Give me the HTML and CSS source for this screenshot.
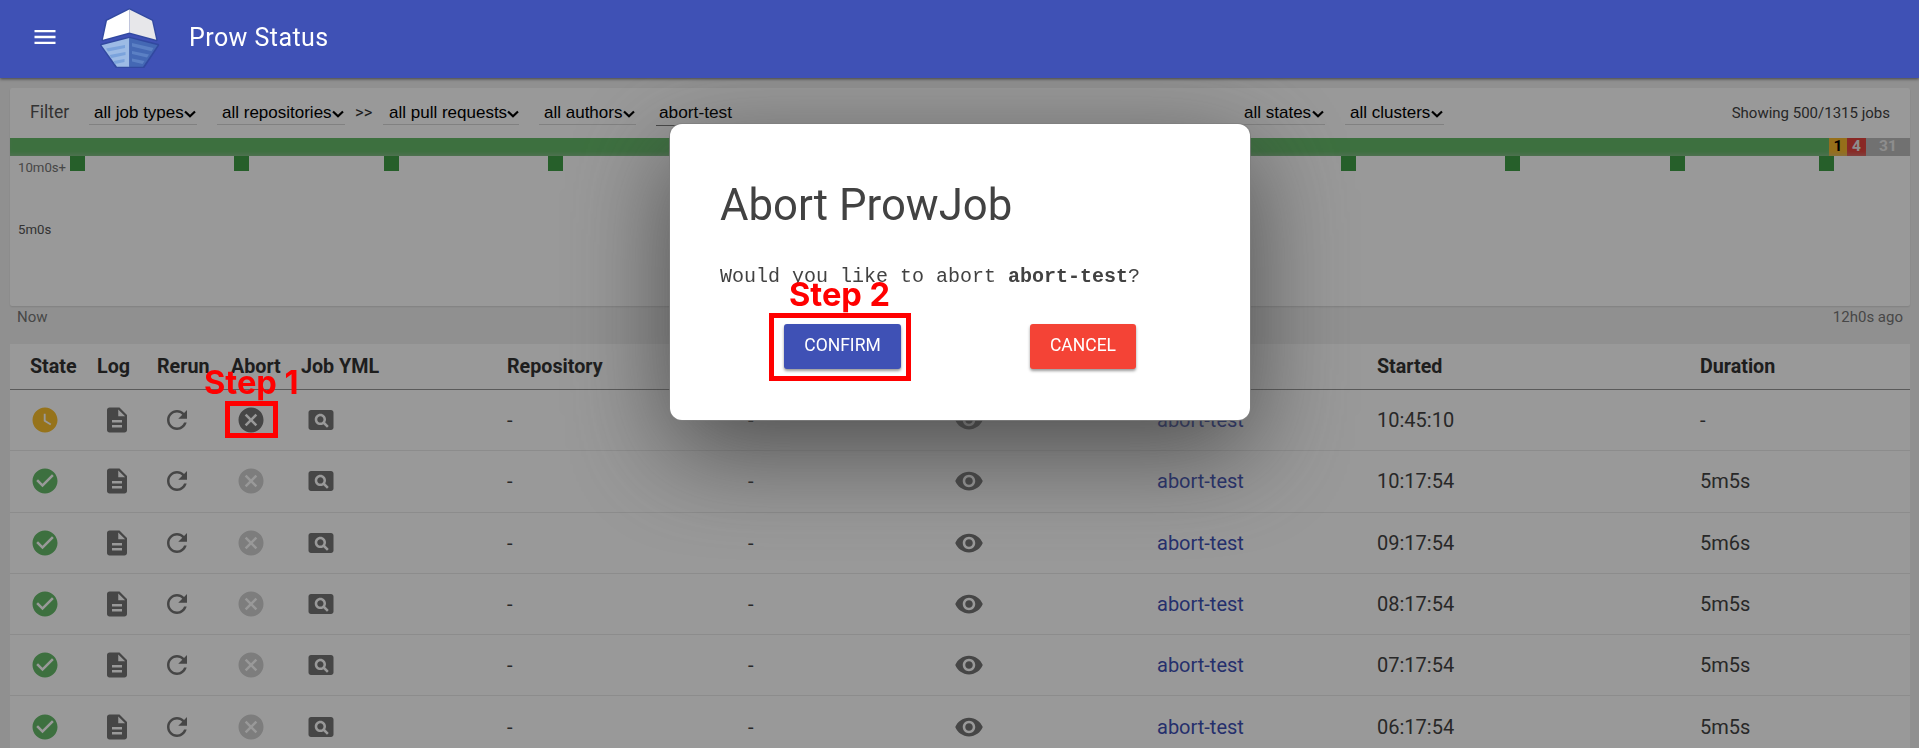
FILE: index.html
```html
<!DOCTYPE html>
<html lang="en">
<head>
<meta charset="utf-8">
<title>Prow Status</title>
<link rel="stylesheet" href="styles.css">
</head>
<body>
<svg class="defs" aria-hidden="true">
  <symbol id="check" viewBox="0 0 24 24"><path d="M12 2C6.48 2 2 6.48 2 12s4.480 10 10 10 10-4.480 10-10S17.520 2 12 2zm-2 15l-5-5 1.410-1.410L10 14.170l7.590-7.590L19 8l-9 9z"/></symbol>
  <symbol id="clock" viewBox="0 0 24 24"><path d="M12 2C6.500 2 2 6.500 2 12s4.500 10 10 10 10-4.500 10-10S17.500 2 12 2zm4.200 14.200L11 13V7h1.500v5.200l4.500 2.700-.8 1.300z"/></symbol>
  <symbol id="doc" viewBox="0 0 24 24"><path d="M14 2H6c-1.100 0-1.990.9-1.990 2L4 20c0 1.100.89 2 1.990 2H18c1.100 0 2-.9 2-2V8l-6-6zm2 16H8v-2h8v2zm0-4H8v-2h8v2zm-3-5V3.500L18.500 9H13z"/></symbol>
  <symbol id="rerun" viewBox="0 0 24 24"><path d="M17.650 6.350C16.200 4.900 14.210 4 12 4c-4.420 0-7.990 3.580-7.990 8s3.570 8 7.990 8c3.730 0 6.840-2.550 7.730-6h-2.080c-.82 2.330-3.040 4-5.650 4-3.310 0-6-2.690-6-6s2.690-6 6-6c1.660 0 3.140.69 4.220 1.780L13 11h7V4l-2.350 2.350z"/></symbol>
  <symbol id="cancel" viewBox="0 0 24 24"><path d="M12 2C6.470 2 2 6.470 2 12s4.470 10 10 10 10-4.470 10-10S17.530 2 12 2zm5 13.590L15.590 17 12 13.410 8.410 17 7 15.590 10.590 12 7 8.410 8.410 7 12 10.590 15.590 7 17 8.410 13.410 12 17 15.590z"/></symbol>
  <symbol id="view" viewBox="0 0 24 24"><path d="M11.500 9C10.120 9 9 10.120 9 11.500s1.120 2.500 2.500 2.500 2.500-1.120 2.500-2.500S12.880 9 11.500 9zM20 4H4c-1.100 0-2 .9-2 2v12c0 1.100.9 2 2 2h16c1.100 0 2-.9 2-2V6c0-1.100-.9-2-2-2zm-3.210 14.210l-2.910-2.910c-.69.44-1.510.7-2.390.7C9.010 16 7 13.990 7 11.500S9.010 7 11.500 7 16 9.010 16 11.500c0 .88-.26 1.690-.7 2.390l2.910 2.900-1.420 1.420z"/></symbol>
  <symbol id="eye" viewBox="0 0 24 24"><path d="M12 4.500C7 4.500 2.730 7.610 1 12c1.730 4.390 6 7.500 11 7.500s9.270-3.110 11-7.500c-1.730-4.390-6-7.500-11-7.500zM12 17c-2.760 0-5-2.240-5-5s2.240-5 5-5 5 2.240 5 5-2.240 5-5 5zm0-8c-1.660 0-3 1.340-3 3s1.340 3 3 3 3-1.340 3-3-1.340-3-3-3z"/></symbol>
</svg>

<header class="topbar">
  <svg class="menu" viewBox="0 0 24 24"><path d="M3 18h18v-2H3v2zm0-5h18v-2H3v2zm0-7v2h18V6H3z"/></svg>
  <svg class="logo" viewBox="100 8 60 60">
    <g stroke="#3249a0" stroke-width="2.400" stroke-linejoin="round" fill="#3249a0">
      <path d="M102.700 40 106.700 20.500 129.400 9.400 152 20.500 156.500 40 129.400 32.700z"/>
      <path d="M101.300 45 129.400 38 158 45 143.500 67H116.500z"/>
    </g>
    <path fill="#fff" d="M102.900 39.800 107 20.700 129.400 9.600V32.500z"/>
    <path fill="#e7e7ea" d="M156.200 39.800 152 20.700 129.400 9.600V32.500z"/>
    <path fill="#9dbbe5" d="M101.500 45.300 129.400 38V66.700H117z"/>
    <path fill="#4468b4" d="M157.500 45.300 129.400 38V66.700H143z"/>
    <path fill="#7ba3dc" d="M106 48.500l19-3.500v3l-17 3.500zM109.500 55l16-3v3l-14 3zM113.500 61l11-2v3l-9.500 2z"/>
    <path fill="#5b80c4" d="M132 43l21.500 5-2 3.200L132 46.500zM132 51l17 3.500-2 3-15-3.500zM132 58.500l12.500 2.500-2 3-10.500-2.500z"/>
  </svg>
  <h1 class="brand">Prow Status</h1>
</header>

<main class="page">
  <section class="card">
    <div class="filters">
      <span class="label">Filter</span>
      <span class="select types">all job types<svg viewBox="0 0 12 8"><path d="M1 1.500 6 6.300l5-4.800"/></svg></span>
      <span class="select repos">all repositories<svg viewBox="0 0 12 8"><path d="M1 1.500 6 6.300l5-4.800"/></svg></span>
      <span class="sep">&gt;&gt;</span>
      <span class="select pulls">all pull requests<svg viewBox="0 0 12 8"><path d="M1 1.500 6 6.300l5-4.800"/></svg></span>
      <span class="select authors">all authors<svg viewBox="0 0 12 8"><path d="M1 1.500 6 6.300l5-4.800"/></svg></span>
      <span class="select job">abort-test</span>
      <span class="select states">all states<svg viewBox="0 0 12 8"><path d="M1 1.500 6 6.300l5-4.800"/></svg></span>
      <span class="select clusters">all clusters<svg viewBox="0 0 12 8"><path d="M1 1.500 6 6.300l5-4.800"/></svg></span>
      <span class="count">Showing 500/1315 jobs</span>
    </div>
    <div class="bar">
      <span class="ok"></span><span class="pending">1</span><span class="failed">4</span><span class="aborted">31</span>
    </div>
    <div class="chart">
      <span class="tick">10m0s+</span>
      <span class="tick mid">5m0s</span>
      <i class="dot" style="left:60px"></i><i class="dot" style="left:224px"></i><i class="dot" style="left:374px"></i><i class="dot" style="left:538px"></i>
      <i class="dot" style="left:1331px"></i><i class="dot" style="left:1495px"></i><i class="dot" style="left:1660px"></i><i class="dot" style="left:1809px"></i>
    </div>
  </section>
  <div class="range"><span>Now</span><span>12h0s ago</span></div>

  <section class="table">
    <div class="row head"><span>State</span><span>Log</span><span>Rerun</span><span>Abort</span><span>Job YML</span><span>Repository</span><span></span><span></span><span></span><span>Started</span><span>Duration</span></div>
    <div class="row">
      <svg class="pend"><use href="#clock"/></svg><svg><use href="#doc"/></svg><svg><use href="#rerun"/></svg><svg><use href="#cancel"/></svg><svg><use href="#view"/></svg><span>-</span><span>-</span><svg><use href="#eye"/></svg><a>abort-test</a><span>10:45:10</span><span>-</span>
    </div>
    <div class="row">
      <svg class="good"><use href="#check"/></svg><svg><use href="#doc"/></svg><svg><use href="#rerun"/></svg><svg class="off"><use href="#cancel"/></svg><svg><use href="#view"/></svg><span>-</span><span>-</span><svg><use href="#eye"/></svg><a>abort-test</a><span>10:17:54</span><span>5m5s</span>
    </div>
    <div class="row">
      <svg class="good"><use href="#check"/></svg><svg><use href="#doc"/></svg><svg><use href="#rerun"/></svg><svg class="off"><use href="#cancel"/></svg><svg><use href="#view"/></svg><span>-</span><span>-</span><svg><use href="#eye"/></svg><a>abort-test</a><span>09:17:54</span><span>5m6s</span>
    </div>
    <div class="row">
      <svg class="good"><use href="#check"/></svg><svg><use href="#doc"/></svg><svg><use href="#rerun"/></svg><svg class="off"><use href="#cancel"/></svg><svg><use href="#view"/></svg><span>-</span><span>-</span><svg><use href="#eye"/></svg><a>abort-test</a><span>08:17:54</span><span>5m5s</span>
    </div>
    <div class="row">
      <svg class="good"><use href="#check"/></svg><svg><use href="#doc"/></svg><svg><use href="#rerun"/></svg><svg class="off"><use href="#cancel"/></svg><svg><use href="#view"/></svg><span>-</span><span>-</span><svg><use href="#eye"/></svg><a>abort-test</a><span>07:17:54</span><span>5m5s</span>
    </div>
    <div class="row">
      <svg class="good"><use href="#check"/></svg><svg><use href="#doc"/></svg><svg><use href="#rerun"/></svg><svg class="off"><use href="#cancel"/></svg><svg><use href="#view"/></svg><span>-</span><span>-</span><svg><use href="#eye"/></svg><a>abort-test</a><span>06:17:54</span><span>5m5s</span>
    </div>
  </section>
</main>

<div class="backdrop"></div>
<div class="dialog" role="dialog">
  <h2 class="title">Abort ProwJob</h2>
  <p class="question">Would you like to abort <b>abort-test</b>?</p>
  <div class="actions">
    <button class="btn confirm">CONFIRM</button>
    <button class="btn cancel">CANCEL</button>
  </div>
</div>

<div class="note note-one">Step 1</div>
<div class="frame frame-one"></div>
<div class="note note-two">Step 2</div>
<div class="frame frame-two"></div>
</body>
</html>
```

FILE: styles.css
```css
* { box-sizing: border-box; }
html, body { height: 100%; overflow: hidden; }
body { margin: 0; background: #f1f1f1; font-family: Roboto, "Liberation Sans", sans-serif; color: #424242; }
.defs { position: absolute; width: 0; height: 0; }

.topbar { position: relative; z-index: 3; height: 78px; padding-left: 31px; display: flex; align-items: center; background: #3f51b5; color: #fff; box-shadow: 0 1px 3px rgba(0,0,0,.55); }
.menu { width: 28px; height: 28px; fill: #fff; margin-top: -4px; }
.logo { width: 60px; height: 60px; margin-left: 41px; margin-top: -2px; }
.brand { margin: -2px 0 0 29px; font-size: 25px; line-height: 32px; font-weight: 400; letter-spacing: .45px; }

.page { padding: 10px 9px 0 10px; }
.card { height: 218px; background: #fff; border-radius: 2px; box-shadow: 0 1px 2px rgba(0,0,0,.12); }
.filters { height: 50px; padding: 0 20px; display: flex; align-items: flex-start; }
.label { width: 59px; margin-top: 13px; font-size: 17.500px; line-height: 22px; color: #555; }
.select { height: 37px; padding: 14px 1px 0 5px; display: flex; justify-content: space-between; font: 17px/21px "Liberation Sans", sans-serif; color: #000; border-bottom: 1px solid #d8d8d8; white-space: nowrap; }
.select svg { width: 12px; height: 8px; margin-top: 8px; fill: none; stroke: #000; stroke-width: 2.200; flex: none; }
.types { width: 108px; }
.repos { width: 128px; margin-left: 20px; }
.sep { width: 38px; padding-left: 10px; margin-top: 14px; font-size: 16.500px; line-height: 21px; color: #333; }
.pulls { width: 136px; padding-left: 6px; }
.authors { width: 97px; margin-left: 20px; }
.job { width: 180px; height: 38px; margin-left: 20px; padding-left: 3px; border-color: #777; font-size: 17.300px; }
.states { width: 86px; margin-left: 403px; }
.clusters { width: 99px; margin-left: 20px; }
.count { margin: 15px 0 0 auto; font-size: 15px; line-height: 20px; }
.bar { height: 18px; display: flex; font-size: 15.500px; font-weight: 700; line-height: 17px; text-align: center; }
.bar span { box-shadow: inset 0 -4px 4px -2px rgba(190,190,190,.4); }
.ok { flex: 1; background: #66bb6a; }
.pending { width: 18px; background: #fbb92c; color: #000; }
.failed { width: 19px; background: #e5443d; color: #ececec; }
.aborted { width: 44px; background: #bdbdbd; color: #ececec; }
.chart { position: relative; height: 150px; padding: 4px 7px 4px 8px; display: flex; flex-direction: column; font-size: 13.200px; line-height: 16px; color: #777; }
.tick.mid { margin-top: 46px; color: #555; }
.dot { position: absolute; top: 0; width: 15px; height: 15px; background: #409f47; }
.range { height: 38px; padding: 2px 7px 0; display: flex; justify-content: space-between; font-size: 15px; line-height: 18px; color: #777; }

.table { background: #fff; }
.row { height: 61.300px; display: grid; grid-template-columns: 67px 60px 74px 70px 206px 241px 201px 208px 220px 323px 1fr; align-items: center; padding-left: 20px; border-bottom: 1px solid #eaeaea; font-size: 20px; line-height: 24px; color: #444; white-space: nowrap; }
.head { height: 46px; font-weight: 700; font-size: 19.700px; color: #333; border-bottom: 1px solid #969696; }
.row svg { width: 30px; height: 30px; fill: #757575; }
.row svg:nth-child(2), .row svg:nth-child(3), .row svg:nth-child(4), .row svg:nth-child(5), .row svg:nth-child(8) { margin-left: 5px; }
.row svg.pend { fill: #fbc02d; }
.row svg.good { fill: #66bb6a; }
.row svg.off { fill: #d0d0d0; }
.row a { color: #3f51b5; }

.backdrop { position: fixed; inset: 78px 0 0; z-index: 2; background: rgba(0,0,0,.4); }
.dialog { position: fixed; z-index: 2; left: 670px; top: 124px; width: 580px; height: 296px; padding: 50px; border-radius: 12px; background: #fff; box-shadow: 0 0 0 1px rgba(128,128,128,.8), 0 30px 100px rgba(60,60,60,.82); }
.title { margin: 0; font-size: 43.700px; line-height: 62px; font-weight: 400; }
.question { margin: 29px 0 0; font: 20px/24px "Liberation Mono", monospace; }
.actions { display: flex; margin-top: 35px; padding-left: 64px; gap: 129px; }
.btn { height: 45px; padding: 0 0 3px; border: 0; border-radius: 3px; color: #fff; font: 17.500px/24px Roboto, sans-serif; box-shadow: 0 2px 3px rgba(0,0,0,.4); }
.confirm { width: 117px; background: #3f51b5; }
.cancel { width: 106px; background: #f44336; }

.note { position: fixed; z-index: 5; font: 700 32.600px/40px Inter, sans-serif; color: #f00; white-space: nowrap; }
.note-one { left: 204px; top: 362px; }
.note-two { left: 789px; top: 274px; }
.frame { position: fixed; z-index: 5; border: 5px solid #f00; }
.frame-one { left: 225px; top: 401px; width: 53px; height: 37px; }
.frame-two { left: 769px; top: 313px; width: 142px; height: 68px; }
```
